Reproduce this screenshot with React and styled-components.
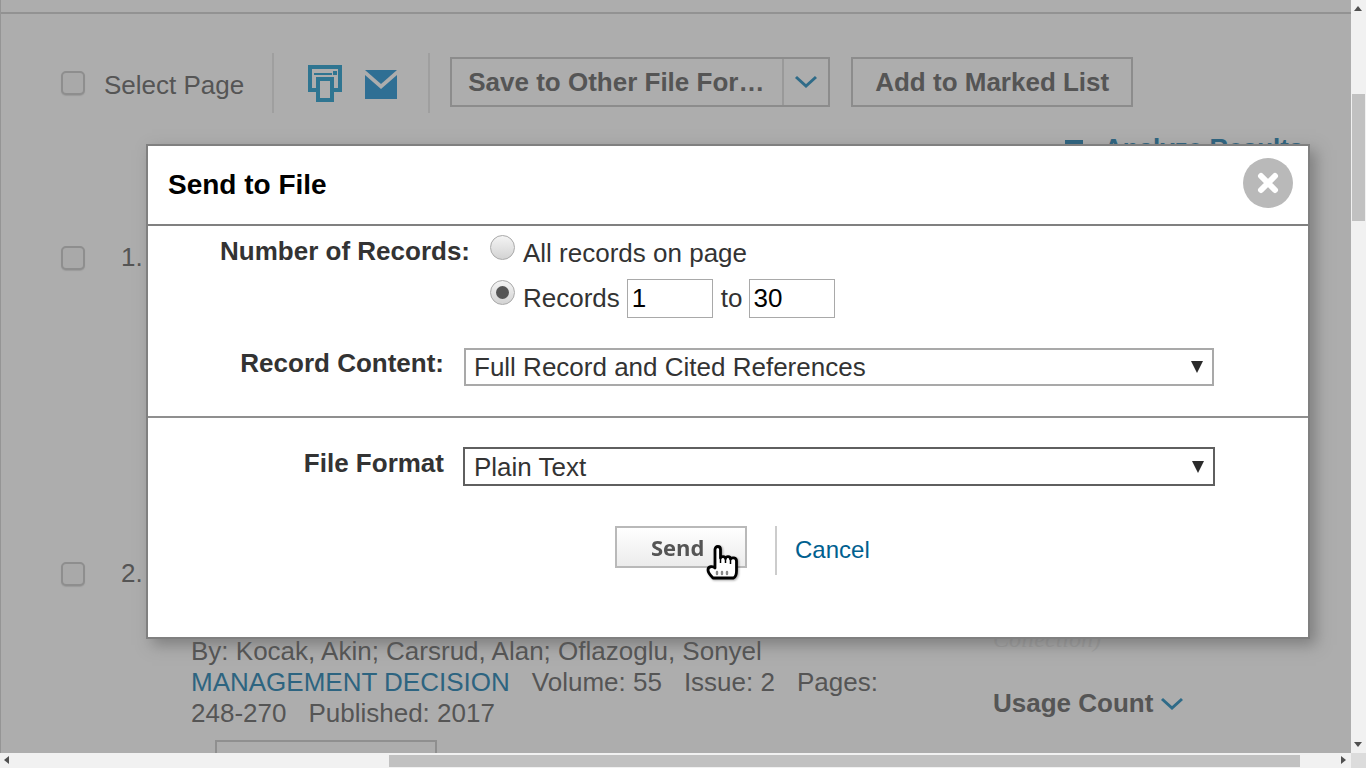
import React from "react";
import styled, { createGlobalStyle } from "styled-components";

const GlobalStyle = createGlobalStyle`
  html, body {
    margin: 0;
    padding: 0;
    height: 100%;
    overflow: hidden;
    font-family: "Liberation Sans", Arial, sans-serif;
  }
`;

const Frame = styled.div`
  display: grid;
  grid-template-columns: 1fr 15px;
  grid-template-rows: 1fr 15px;
  width: 1366px;
  height: 768px;
`;

const Viewport = styled.div`
  position: relative;
  overflow: hidden;
  background: #adadad;
  border-left: 1px solid #959595;
  color: #555;
`;

const TopRule = styled.div`
  height: 12px;
  border-bottom: 2px solid #929292;
`;

const Toolbar = styled.div`
  display: flex;
  align-items: center;
  height: 60px;
  margin-top: 39px;
  padding-left: 60px;
`;

const CheckBox = styled.span`
  display: block;
  flex: none;
  box-sizing: border-box;
  width: 24px;
  height: 24px;
  border: 2px solid #8e8e8e;
  border-radius: 5px;
  background: #a9a9a9;
  box-shadow: 0 1px 1px #9b9b9b;
`;

const SelectLabel = styled.span`
  margin: 4px 28px 0 19px;
  font-size: 26px;
`;

const ToolDivider = styled.span`
  flex: none;
  width: 2px;
  height: 60px;
  background: #9f9f9f;
`;

const IconGroup = styled.div`
  display: flex;
  align-items: center;
  gap: 21px;
  padding: 0 30px 0 33px;
  filter: blur(0.4px);
`;

const SplitButton = styled.div`
  display: flex;
  box-sizing: border-box;
  width: 380px;
  height: 50px;
  margin: -2px 0 0 20px;
  border: 2px solid #8c8c8c;
`;

const SplitLabel = styled.span`
  flex: 1;
  padding-left: 16px;
  font-size: 26px;
  font-weight: 700;
  line-height: 47px;
  white-space: nowrap;
`;

const SplitArrow = styled.span`
  display: flex;
  align-items: center;
  justify-content: center;
  flex: none;
  width: 44px;
  border-left: 2px solid #999;
`;

const PlainButton = styled.div`
  box-sizing: border-box;
  width: 282px;
  height: 50px;
  margin: -2px 0 0 21px;
  border: 2px solid #8c8c8c;
  font-size: 26px;
  font-weight: 700;
  line-height: 47px;
  text-align: center;
`;

const AnalyzeRow = styled.div`
  display: flex;
  align-items: center;
  gap: 21px;
  height: 30px;
  margin: 20px 0 0 1064px;
  color: #2d6480;
  font-size: 26px;
  font-weight: 700;
  white-space: nowrap;
`;

const AnalyzeMark = styled.span`
  display: block;
  width: 18px;
  height: 16px;
  border-top: 4px solid #2d6480;
  box-sizing: border-box;
`;

const RecordRow = styled.div`
  display: grid;
  grid-template-columns: 60px 60px 1fr;
  align-items: start;
  height: ${(props) => props.$height}px;
`;

const RecordCheck = styled(CheckBox)`
  margin-top: ${(props) => props.$top}px;
`;

const RecordNumber = styled.span`
  margin-top: ${(props) => props.$top}px;
  padding-left: 120px;
  font-size: 26px;
  grid-column: 1 / 4;
  grid-row: 1;
`;

const RecordCheckCell = styled.div`
  grid-column: 1;
  grid-row: 1;
  padding-left: 60px;
`;

const RecordBody = styled.div`
  display: grid;
  grid-column: 3;
  grid-row: 1;
  grid-template-columns: 802px 1fr;
  padding-top: ${(props) => props.$top}px;
  margin-left: 70px;
`;

const MetaLines = styled.div`
  font-size: 26px;
  line-height: 31px;
  white-space: nowrap;
`;

const JournalLink = styled.span`
  color: #2d6480;
`;

const MetaGap = styled.span`
  margin-left: 22px;
`;

const ViewButton = styled.div`
  box-sizing: border-box;
  width: 222px;
  height: 40px;
  margin: 11px 0 0 24px;
  border: 2px solid #8f8f8f;
`;

const SideColumn = styled.div`
  font-size: 26px;
`;

const SideFaded = styled.div`
  margin-top: -11px;
  color: #a1a1a1;
  font-family: "Liberation Serif", serif;
  font-size: 24px;
  font-style: italic;
  line-height: 28px;
`;

const UsageCount = styled.div`
  display: flex;
  align-items: center;
  gap: 7px;
  margin-top: 35px;
  font-weight: 700;
`;

const Modal = styled.div`
  position: absolute;
  left: 145px;
  top: 144px;
  display: flex;
  flex-direction: column;
  box-sizing: border-box;
  width: 1164px;
  height: 495px;
  border: 2px solid #808080;
  background: #fff;
  color: #333;
  box-shadow: 6px 6px 14px rgba(90, 90, 90, 0.55);
`;

const ModalHeader = styled.div`
  display: flex;
  align-items: center;
  justify-content: space-between;
  flex: none;
  box-sizing: border-box;
  height: 80px;
  padding: 0 15px 0 20px;
  border-bottom: 2px solid #808080;
`;

const ModalTitle = styled.h2`
  margin: 0;
  color: #000;
  font-size: 28px;
  font-weight: 700;
`;

const CloseButton = styled.span`
  display: flex;
  align-items: center;
  justify-content: center;
  width: 50px;
  height: 50px;
  margin-bottom: 4px;
  border-radius: 50%;
  background: #b9b9b9;
  filter: blur(0.7px);
`;

const RecordsSection = styled.div`
  flex: none;
  box-sizing: border-box;
  height: 192px;
  border-bottom: 2px solid #8f8f8f;
`;

const FieldRow = styled.div`
  display: flex;
  align-items: flex-start;
  gap: 20px;
  margin-top: ${(props) => props.$top}px;
`;

const FieldLabel = styled.label`
  flex: none;
  width: ${(props) => props.$width}px;
  padding-top: ${(props) => props.$pad}px;
  font-size: 26px;
  font-weight: 700;
  text-align: right;
  line-height: 30px;
`;

const RadioStack = styled.div`
  display: flex;
  flex-direction: column;
`;

const RadioRow = styled.div`
  display: flex;
  align-items: center;
  height: ${(props) => props.$height}px;
  font-size: 26px;
`;

const Radio = styled.span`
  display: flex;
  align-items: center;
  justify-content: center;
  flex: none;
  box-sizing: border-box;
  width: 25px;
  height: 25px;
  margin: -12px 8px 0 0;
  border: 1px solid #a9a9a9;
  border-radius: 50%;
  background: linear-gradient(#f4f4f4, #d3d3d3);
  &::after {
    content: "";
    display: ${(props) => (props.$checked ? "block" : "none")};
    width: 13px;
    height: 13px;
    border-radius: 50%;
    background: #555;
  }
`;

const NumberInput = styled.input`
  box-sizing: border-box;
  width: 86px;
  height: 39px;
  margin: 0 7px;
  padding: 1px 4px;
  border: 1px solid #a9a9a9;
  border-radius: 0;
  outline: none;
  color: #000;
  font-family: inherit;
  font-size: 26px;
`;

const ToWord = styled.span`
  margin: 0 -1px 0 1px;
`;

const DropdownWrap = styled.div`
  position: relative;
  width: ${(props) => props.$width}px;
  margin: ${(props) => (props.$focused ? "-1px 0 0 -1px" : "0")};
  &::after {
    content: "";
    position: absolute;
    right: 11px;
    top: ${(props) => (props.$focused ? 14 : 13)}px;
    width: 0;
    height: 0;
    border-left: 6px solid transparent;
    border-right: 6px solid transparent;
    border-top: 12px solid #2b2b2b;
    pointer-events: none;
  }
`;

const Dropdown = styled.select`
  display: block;
  box-sizing: border-box;
  width: 100%;
  height: ${(props) => (props.$focused ? 39 : 38)}px;
  padding: 0 0 0 ${(props) => (props.$focused ? 9 : 8)}px;
  border: 2px solid ${(props) => (props.$focused ? "#5f5f5f" : "#a9a9a9")};
  border-radius: 0;
  outline: none;
  appearance: none;
  background-color: #fff;
  color: #333;
  font-family: inherit;
  font-size: 26px;
`;

const ActionRow = styled.div`
  display: flex;
  align-items: flex-start;
  margin: 40px 0 0 467px;
`;

const SendButton = styled.div`
  position: relative;
  box-sizing: border-box;
  width: 132px;
  height: 42px;
  border: 2px solid #b9b9b9;
  background: linear-gradient(#fff, #ececec);
  color: #555;
`;

const SendLabel = styled.span`
  display: block;
  padding-left: 34px;
  font-family: "Open Sans", sans-serif;
  font-size: 22px;
  font-weight: 700;
  line-height: 38px;
  filter: blur(0.5px);
`;

const HandCursor = styled.svg`
  position: absolute;
  left: 89px;
  top: 17px;
  filter: drop-shadow(1px 1px 1px rgba(0, 0, 0, 0.35));
`;

const ActionDivider = styled.span`
  flex: none;
  width: 2px;
  height: 49px;
  margin: 0 18px 0 28px;
  background: #ccc;
`;

const CancelLink = styled.a`
  margin-top: 10px;
  color: #00608f;
  font-size: 24px;
`;

const VerticalBar = styled.div`
  position: relative;
  background: #f1f1f1;
`;

const VerticalThumb = styled.div`
  position: absolute;
  left: 1px;
  top: 94px;
  width: 13px;
  height: 127px;
  background: #c1c1c1;
`;

const HorizontalBar = styled.div`
  position: relative;
  background: #f1f1f1;
`;

const HorizontalThumb = styled.div`
  position: absolute;
  left: 389px;
  top: 2px;
  width: 911px;
  height: 12px;
  background: #c1c1c1;
`;

const ScrollCorner = styled.div`
  background: #dcdcdc;
`;

const ArrowGlyph = styled.span`
  position: absolute;
  width: 0;
  height: 0;
  border: 4px solid transparent;
  ${(props) => props.$dir === "up" && "left: 3px; top: 6px; border-top: 0; border-bottom: 5px solid #505050;"}
  ${(props) => props.$dir === "down" && "left: 3px; bottom: 6px; border-bottom: 0; border-top: 5px solid #505050;"}
  ${(props) => props.$dir === "left" && "left: 4px; top: 3px; border-left: 0; border-right: 5px solid #505050;"}
  ${(props) => props.$dir === "right" && "right: 5px; top: 3px; border-right: 0; border-left: 5px solid #505050;"}
`;

const PrintIcon = () => (
  <svg width="36" height="38" viewBox="0 0 36 38">
    <path
      d="M9 26H3V3h30v23h-6"
      fill="none"
      stroke="#2f7591"
      strokeWidth="4"
    />
    <rect x="7" y="9" width="18" height="2" fill="#2f7591" />
    <rect x="26" y="7" width="4" height="4" fill="#2f7591" />
    <rect
      x="11"
      y="15"
      width="14"
      height="21"
      fill="#adadad"
      stroke="#2f7591"
      strokeWidth="4"
    />
  </svg>
);

const MailIcon = () => (
  <svg width="34" height="32" viewBox="0 0 34 32">
    <path d="M1 3h32L17 17z" fill="#2f6f94" />
    <path d="M1 8l16 14L33 8v24H1z" fill="#2f6f94" />
  </svg>
);

const Chevron = ({ width, height }) => (
  <svg width={width} height={height} viewBox="0 0 24 14">
    <path
      d="M2 2l10 9 10-9"
      fill="none"
      stroke="#2f6b88"
      strokeWidth="3"
    />
  </svg>
);

const CloseGlyph = () => (
  <svg width="24" height="24" viewBox="0 0 24 24">
    <path
      d="M5 5l14 14M19 5L5 19"
      stroke="#fff"
      strokeWidth="6"
      strokeLinecap="round"
    />
  </svg>
);

const HandIcon = () => (
  <HandCursor width="34" height="36" viewBox="0 0 34 36">
    <path
      d="M9 23V4.500c0-4 5.500-4 5.500 0V13c0-2 5-2 5 0.500 0-2.500 5-2.500 5 0.500 1-2 6-1.500 6 2V26c0 3-1 6-3 7H7C5 31 2 28 2 25c0-4 5-4 7-2z"
      fill="#fff"
      stroke="#000"
      strokeWidth="2.800"
      strokeLinejoin="round"
    />
    <path d="M14.500 13v5M19.500 13v5M24.500 14v5" stroke="#000" strokeWidth="1.500" />
    <path
      d="M11 27v2M16 27v2M21 27v2"
      stroke="#8a8a8a"
      strokeWidth="2.400"
      strokeLinecap="round"
    />
  </HandCursor>
);

const App = () => {
  return (
    <Frame>
      <GlobalStyle />
      <Viewport>
        <TopRule />
        <Toolbar>
          <CheckBox />
          <SelectLabel>Select Page</SelectLabel>
          <ToolDivider />
          <IconGroup>
            <PrintIcon />
            <MailIcon />
          </IconGroup>
          <ToolDivider />
          <SplitButton>
            <SplitLabel>Save to Other File For…</SplitLabel>
            <SplitArrow>
              <Chevron width={24} height={14} />
            </SplitArrow>
          </SplitButton>
          <PlainButton>Add to Marked List</PlainButton>
        </Toolbar>
        <AnalyzeRow>
          <AnalyzeMark />
          Analyze Results
        </AnalyzeRow>
        <RecordRow $height={396}>
          <RecordCheckCell>
            <RecordCheck $top={83} />
          </RecordCheckCell>
          <RecordNumber $top={79}>1.</RecordNumber>
        </RecordRow>
        <RecordRow $height={0}>
          <RecordCheckCell>
            <RecordCheck $top={3} />
          </RecordCheckCell>
          <RecordNumber $top={-1}>2.</RecordNumber>
          <RecordBody $top={77}>
            <MetaLines>
              By: Kocak, Akin; Carsrud, Alan; Oflazoglu, Sonyel
              <br />
              <JournalLink>MANAGEMENT DECISION</JournalLink>
              <MetaGap>Volume: 55</MetaGap>
              <MetaGap>Issue: 2</MetaGap>
              <MetaGap>Pages:</MetaGap>
              <br />
              248-270
              <MetaGap>Published: 2017</MetaGap>
              <ViewButton />
            </MetaLines>
            <SideColumn>
              <SideFaded>Collection)</SideFaded>
              <UsageCount>
                Usage Count
                <Chevron width={24} height={14} />
              </UsageCount>
            </SideColumn>
          </RecordBody>
        </RecordRow>
        <Modal>
          <ModalHeader>
            <ModalTitle>Send to File</ModalTitle>
            <CloseButton>
              <CloseGlyph />
            </CloseButton>
          </ModalHeader>
          <RecordsSection>
            <FieldRow $top={8}>
              <FieldLabel $width={322} $pad={2}>
                Number of Records:
              </FieldLabel>
              <RadioStack>
                <RadioRow $height={38}>
                  <Radio />
                  All records on page
                </RadioRow>
                <RadioRow $height={52}>
                  <Radio $checked />
                  Records
                  <NumberInput defaultValue="1" readOnly />
                  <ToWord>to</ToWord>
                  <NumberInput defaultValue="30" readOnly />
                </RadioRow>
              </RadioStack>
            </FieldRow>
            <FieldRow $top={24}>
              <FieldLabel $width={296} $pad={0}>
                Record Content:
              </FieldLabel>
              <DropdownWrap $width={750}>
                <Dropdown defaultValue="full">
                  <option value="full">Full Record and Cited References</option>
                </Dropdown>
              </DropdownWrap>
            </FieldRow>
          </RecordsSection>
          <FieldRow $top={30}>
            <FieldLabel $width={296} $pad={0}>
              File Format
            </FieldLabel>
            <DropdownWrap $width={752} $focused>
              <Dropdown $focused defaultValue="plain">
                <option value="plain">Plain Text</option>
              </Dropdown>
            </DropdownWrap>
          </FieldRow>
          <ActionRow>
            <SendButton>
              <SendLabel>Send</SendLabel>
              <HandIcon />
            </SendButton>
            <ActionDivider />
            <CancelLink>Cancel</CancelLink>
          </ActionRow>
        </Modal>
      </Viewport>
      <VerticalBar>
        <ArrowGlyph $dir="up" />
        <VerticalThumb />
        <ArrowGlyph $dir="down" />
      </VerticalBar>
      <HorizontalBar>
        <ArrowGlyph $dir="left" />
        <HorizontalThumb />
        <ArrowGlyph $dir="right" />
      </HorizontalBar>
      <ScrollCorner />
    </Frame>
  );
};

export default App;
